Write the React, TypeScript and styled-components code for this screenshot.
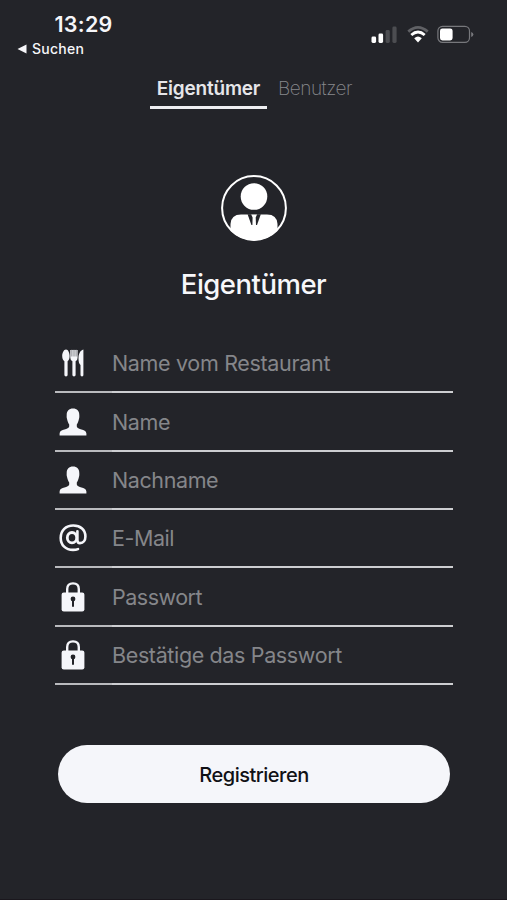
import React from "react";
import styled, { createGlobalStyle } from "styled-components";

const GlobalStyle = createGlobalStyle`
  * { box-sizing: border-box; }
  html, body { margin: 0; background: #232429; }
  body { font-family: Inter, "Liberation Sans", sans-serif; }
`;

const Screen = styled.main`
  width: 507px;
  height: 900px;
  overflow: hidden;
  background: #232429;
  display: flex;
  flex-direction: column;
  border-bottom: 1px solid #1a171d;
`;

const StatusBar = styled.header`
  height: 67px;
  padding: 11px 33px 0 17px;
  display: flex;
  justify-content: space-between;
  color: #f6f6f9;
`;

const ClockColumn = styled.div`
  display: flex;
  flex-direction: column;
`;

const Clock = styled.time`
  margin-left: 37.5px;
  font-size: 21.5px;
  line-height: 27px;
  font-weight: 600;
  letter-spacing: 0.25px;
`;

const BackLink = styled.div`
  display: flex;
  align-items: center;
  gap: 5px;
  font-size: 14px;
  line-height: 22px;
  font-weight: 500;
  letter-spacing: 0.25px;
`;

const StatusIcons = styled.div`
  display: flex;
  height: 20px;
  margin-top: 13px;
`;

const Tabs = styled.nav`
  display: flex;
  height: 42px;
  margin-left: 150px;
`;

const Tab = styled.button<{ $active?: boolean }>`
  width: ${(p) => (p.$active ? 117 : 96)}px;
  height: 42px;
  padding: 5px 0 0;
  border: 0;
  border-bottom: ${(p) => (p.$active ? "3px solid #eeeef1" : "3px solid transparent")};
  background: none;
  color: ${(p) => (p.$active ? "#e6e6e9" : "#88898d")};
  font-family: inherit;
  font-size: 19px;
  line-height: 34px;
  font-weight: ${(p) => (p.$active ? 600 : 200)};
  letter-spacing: ${(p) => (p.$active ? -0.2 : -0.5)}px;
  white-space: nowrap;
`;

const Profile = styled.section`
  display: flex;
  flex-direction: column;
  align-items: center;
  margin-top: 66px;
`;

const Title = styled.h1`
  margin: 25px 0 0;
  color: #f7f7fa;
  font-size: 27.5px;
  line-height: 36px;
  font-weight: 500;
  letter-spacing: -0.5px;
`;

const Form = styled.form`
  display: flex;
  flex-direction: column;
  width: 398px;
  margin: 33px 0 0 55px;
`;

const Field = styled.label`
  display: grid;
  grid-template-columns: 57px 1fr;
  height: 58.35px;
`;

const FieldIcon = styled.span`
  display: flex;
  align-items: center;
  padding-right: 21px;
  justify-content: center;
  color: #f5f6fa;
  border-bottom: 2px solid #b9babd;
`;

const FieldBody = styled.span`
  display: flex;
  align-items: center;
  border-bottom: 2px solid #cdced1;
`;

const Placeholder = styled.span<{ $spacing: number }>`
  color: #85868a;
  font-size: 21.5px;
  line-height: 30px;
  letter-spacing: ${(p) => p.$spacing}px;
  white-space: nowrap;
`;

const SubmitButton = styled.button`
  width: 392px;
  height: 58px;
  margin: 60px 0 0 3px;
  padding: 1px 0 0;
  border: 0;
  border-radius: 29px;
  background: #f5f6fa;
  color: #101115;
  font-family: inherit;
  font-size: 20px;
  font-weight: 500;
  letter-spacing: -0.5px;
`;

const Signal = () => (
  <svg width="26" height="20" viewBox="0 0 26 20">
    <rect x="0.5" y="12.5" width="4.6" height="6.5" rx="1.4" fill="#fff" />
    <rect x="7.5" y="9.5" width="4.6" height="9.5" rx="1.4" fill="#fff" />
    <rect x="14.6" y="6" width="4.2" height="13" rx="1.4" fill="#4c4d51" />
    <rect x="21.4" y="2.5" width="4.2" height="16.5" rx="1.4" fill="#4c4d51" />
  </svg>
);

const Wifi = () => (
  <svg width="22" height="20" viewBox="0 0 22 20">
    <path d="M1.3 7.6 Q11 -0.8 20.7 7.6" fill="none" stroke="#606165" strokeWidth="2.8" />
    <path d="M4.3 11 Q11 5.1 17.7 11" fill="none" stroke="#fff" strokeWidth="2.8" />
    <path d="M7.2 14.2 Q11 10.9 14.8 14.2 L11 18.4 Z" fill="#fff" />
  </svg>
);

const Battery = () => (
  <svg width="37" height="20" viewBox="0 0 37 20">
    <rect x="0.9" y="2.3" width="31.6" height="16" rx="4.6" fill="none" stroke="#77787c" strokeWidth="1.2" />
    <rect x="3" y="4.4" width="12.6" height="12" rx="2.4" fill="#fff" />
    <path d="M34.2 7.9 Q36.4 8.6 36.4 10.4 T34.2 12.9 Z" fill="#77787c" />
  </svg>
);

const IconSpacer = styled.span<{ $width: number }>`
  flex: 0 0 ${(p) => p.$width}px;
`;

const Avatar = () => (
  <svg width="66" height="66" viewBox="0 0 66 66">
    <defs>
      <clipPath id="disc">
        <circle cx="33" cy="33" r="32.5" />
      </clipPath>
    </defs>
    <circle cx="33" cy="21.5" r="13.3" fill="#fff" />
    <path clipPath="url(#disc)" d="M9.5 66V49Q10 39.4 20 39.4H46Q56 39.4 56.5 49V66Z" fill="#fff" />
    <path d="M26.6 39.2H39.8L36 50H30.4Z" fill="#232429" />
    <path d="M30.2 39.6H36L34.7 42.5L35 50H31.4L31.6 42.5Z" fill="#fff" />
    <circle cx="33" cy="33" r="31.9" fill="none" stroke="#fff" strokeWidth="2" />
  </svg>
);

const Cutlery = () => (
  <svg width="24" height="30" viewBox="0 0 24 30">
    <path d="M5 1.5C7.3 1.5 8.6 5 8.6 8C8.6 11 7.6 12.5 6.6 13.2V27Q6.6 28.4 5 28.4T3.4 27V13.2C2.4 12.5 1.2 11 1.2 8C1.2 5 2.7 1.5 5 1.5Z" fill="currentColor" />
    <path d="M9.3 2V9.8Q9.3 12.4 11.4 13.2V27Q11.4 28.4 13 28.4T14.6 27V13.2Q16.6 12.4 16.6 9.8V2Z" fill="currentColor" />
    <path d="M10.9 1.5V8.5M13 1.5V8.5M15.1 1.5V8.5" stroke="#77787e" strokeWidth="0.9" />
    <path d="M22.4 1.5C19 2.4 17.5 6 17.5 10.5C17.5 14 18.2 16 19.5 17V27Q19.5 28.4 21 28.4T22.4 27Z" fill="currentColor" />
  </svg>
);

const Person = () => (
  <svg width="28" height="28" viewBox="0 0 28 28">
    <path d="M14 .4C18 .4 20.4 2.8 20.3 7C20.3 8.2 20.5 9.6 20 10.8C19.6 12.8 18.9 15 17.8 16.4V18.6C18 22 27 20.8 27.4 25.4V27.4H.6V25.4C1 20.8 10 22 10.2 18.6V16.4C9.1 15 8.4 12.8 8 10.8C7.5 9.6 7.7 8.2 7.7 7C7.6 2.8 10 .4 14 .4Z" fill="currentColor" />
  </svg>
);

const At = () => (
  <svg width="28" height="28" viewBox="0 0 28 28" fill="none" stroke="currentColor">
    <ellipse cx="13" cy="13.7" rx="4.7" ry="5.2" strokeWidth="2.8" />
    <path d="M18.4 7.3V16.2Q18.4 19.1 21 19.1C24.4 19.1 26.4 16.3 26.4 12.4C26.4 5.8 21.5 1.5 14.3 1.5C6.8 1.5 1.7 6.4 1.7 13.9C1.7 21.2 6.7 25.9 14 25.9Q17 25.9 19 25.1" strokeWidth="2.6" strokeLinecap="round" />
  </svg>
);

const Lock = () => (
  <svg width="24" height="32" viewBox="0 0 24 32">
    <path d="M6.2 13V8Q6.2 2.4 12 2.4T17.8 8V13" fill="none" stroke="currentColor" strokeWidth="2.4" />
    <rect x=".6" y="11.5" width="22.8" height="19" rx="2.2" fill="currentColor" />
    <circle cx="12" cy="18" r="2.4" fill="#232429" />
    <path d="M12 18V25" stroke="#232429" strokeWidth="2" strokeLinecap="round" />
  </svg>
);

const fields = [
  { label: "Name vom Restaurant", Icon: Cutlery, spacing: -0.33 },
  { label: "Name", Icon: Person, spacing: -0.4 },
  { label: "Nachname", Icon: Person, spacing: -0.4 },
  { label: "E-Mail", Icon: At, spacing: -0.45 },
  { label: "Passwort", Icon: Lock, spacing: -0.5 },
  { label: "Bestätige das Passwort", Icon: Lock, spacing: -0.36 },
];

export default function App() {
  return (
    <>
      <GlobalStyle />
      <Screen>
        <StatusBar>
          <ClockColumn>
            <Clock>13:29</Clock>
            <BackLink>
              <svg width="10" height="10" viewBox="0 0 10 10">
                <path d="M.5 5L9.5.4V9.6Z" fill="currentColor" />
              </svg>
              Suchen
            </BackLink>
          </ClockColumn>
          <StatusIcons>
            <Signal />
            <IconSpacer $width={10} />
            <Wifi />
            <IconSpacer $width={8} />
            <Battery />
          </StatusIcons>
        </StatusBar>
        <Tabs>
          <Tab $active>Eigentümer</Tab>
          <Tab>Benutzer</Tab>
        </Tabs>
        <Profile>
          <Avatar />
          <Title>Eigentümer</Title>
        </Profile>
        <Form>
          {fields.map(({ label, Icon, spacing }) => (
            <Field key={label}>
              <FieldIcon>
                <Icon />
              </FieldIcon>
              <FieldBody>
                <Placeholder $spacing={spacing}>{label}</Placeholder>
              </FieldBody>
            </Field>
          ))}
          <SubmitButton type="button">Registrieren</SubmitButton>
        </Form>
      </Screen>
    </>
  );
}
